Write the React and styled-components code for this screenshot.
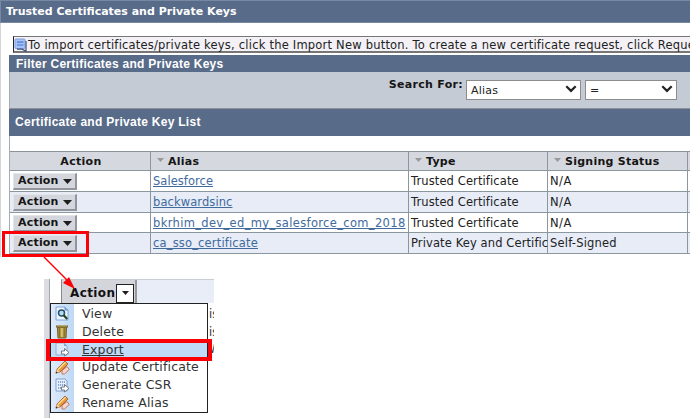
import React from "react";
import styled, { createGlobalStyle } from "styled-components";

const Global = createGlobalStyle`
  * { box-sizing: border-box; }
  body { margin: 0; background: #fff; overflow: hidden; }
`;

const Page = styled.main`
  position: relative;
  width: 690px;
  height: 418px;
  overflow: hidden;
  background: #fff;
  color: #222;
  font: 11.5px/18px "DejaVu Sans", Verdana, sans-serif;
  white-space: nowrap;
`;
const Window = styled.section`
  height: 257px;
  border-left: 1px solid #d3d5d9;
`;
const Label = styled.span`
  letter-spacing: ${(p) => p.$ls || 0}px;
`;
const TitleBar = styled.header`
  height: 23px;
  margin-left: -1px;
  padding: 2px 0 0 5px;
  border: solid #7888a2;
  border-width: 1px 0 1px 1px;
  background: #586b89;
  color: #fff;
  font-size: 11px;
  font-weight: bold;
`;
const Notice = styled.div`
  display: flex;
  align-items: center;
  width: 690px;
  height: 17px;
  margin: 13px 0 2px 12px;
  padding-top: 1px;
  border: 1px solid #777;
  border-bottom: 2px solid #777;
  border-left-color: #222;
  background: #f3f1f5;
  svg { flex: none; margin-right: 1px; }
`;
const Panels = styled.div`
  margin-left: 8px;
  border-left: 1px solid #a5acb7;
`;
const Heading = styled.h2`
  height: ${(p) => p.$h}px;
  margin: 0 0 0 -1px;
  padding-left: ${(p) => p.$pad}px;
  background: #586b89;
  color: #fff;
  font: bold 12px/${(p) => p.$line}px "Liberation Sans", Arial, sans-serif;
`;
const Filter = styled.form`
  display: flex;
  align-items: flex-start;
  height: 37px;
  border-bottom: 1px solid #8d9095;
  background: #c5cbd5;
`;
const SearchLabel = styled.label`
  width: 456px;
  padding: 4px 3px 0 0;
  text-align: right;
  color: #151515;
  font-size: 11px;
  font-weight: bold;
`;
const Select = styled.div`
  display: flex;
  align-items: center;
  justify-content: space-between;
  width: ${(p) => p.$w}px;
  height: 20px;
  margin: 8px 4px 0 0;
  padding: 2px 3px 0 4px;
  border: 1px solid #8c8c8c;
  background: #fff;
  font-size: 11px;
  svg { margin-top: -4px; }
`;
const Table = styled.div`
  margin-top: 15px;
  border-top: 1px solid #8b9299;
`;
const Row = styled.div`
  display: grid;
  grid-template-columns: 141px 258px 139px 140px 20px;
  height: ${(p) => p.$h}px;
  background: ${(p) => p.$bg};
  border-bottom: 1px solid #8b979f;
`;
const Cell = styled.div`
  padding: ${(p) => p.$top || 1}px 0 0 ${(p) => p.$pad || 2}px;
  border-right: 1px solid #8b979f;
`;
const Head = styled(Cell)`
  display: flex;
  align-items: center;
  justify-content: ${(p) => (p.$center ? "center" : "flex-start")};
  gap: 4px;
  font-size: 11px;
  font-weight: bold;
  line-height: 16px;
  color: #151515;
  svg { flex: none; margin-top: -3px; }
`;
const Link = styled.a`
  color: #416a9d;
  text-decoration: underline;
  text-underline-offset: 1px;
  text-decoration-skip-ink: none;
`;
const ActionButton = styled.div`
  display: flex;
  align-items: center;
  gap: 4px;
  width: 64px;
  height: 17px;
  margin-left: 1px;
  padding-left: 4px;
  border: solid #e4e5e8;
  border-width: 1px 2px 2px 1px;
  border-right-color: #92969c;
  border-bottom-color: #92969c;
  background: #d3d6dc;
  color: #151515;
  font-size: 11px;
  font-weight: bold;
`;
const Callout = styled.div`
  position: absolute;
  left: ${(p) => p.$x}px;
  top: ${(p) => p.$y}px;
  width: ${(p) => p.$w}px;
  height: ${(p) => p.$h}px;
  border: ${(p) => p.$b}px solid #fb0007;
`;
const Arrow = styled.svg`
  position: absolute;
  left: 40px;
  top: 256px;
`;
const Inset = styled.section`
  position: absolute;
  left: 44px;
  top: 279px;
  width: 170px;
  height: 139px;
  padding-left: 1px;
  border-left: 5px solid #dcdde2;
  box-shadow: inset 1px 0 #a4a9b1;
`;
const InsetBar = styled.div`
  display: flex;
  height: 24px;
  margin-left: 11px;
  border-top: 1px solid #c9ced6;
  border-left: 1px solid #888;
  background: #e8edf7;
`;
const InsetButton = styled.div`
  display: flex;
  align-items: center;
  justify-content: space-between;
  width: 75px;
  padding: 3px 1px 0 8px;
  border-right: 2px solid #999;
  background: #d3d5db;
  color: #111;
  font-size: 12px;
  font-weight: bold;
`;
const Drop = styled.span`
  display: grid;
  place-items: center;
  width: 18px;
  height: 19px;
  border: 1px solid #222;
  background: #fff;
`;
const Fragments = styled.div`
  position: absolute;
  left: 160px;
  top: 27px;
  width: 5px;
  overflow: hidden;
  line-height: 17.5px;
  color: #333;
`;
const Menu = styled.ul`
  position: relative;
  width: 158px;
  height: 110px;
  margin: 0;
  padding: 1px 0;
  list-style: none;
  border: 1px solid #222;
  background: linear-gradient(90deg, #deebfb 0, #bfd8f5 23px, #fff 23px);
`;
const Item = styled.li`
  display: flex;
  align-items: center;
  height: 17.8px;
  padding-left: 4px;
  font-size: 12.5px;
  letter-spacing: 0.15px;
  color: #333;
  background: ${(p) => (p.$active ? "#bfdbf7" : "transparent")};
  text-decoration: ${(p) => (p.$active ? "underline" : "none")};
  text-underline-offset: 1px;
  text-decoration-skip-ink: none;
  svg { flex: none; margin-right: 12px; }
`;

const Tri = ({ w = 9, h = 5, c = "#1d1d1d" }) => (
  <svg width={w} height={h} viewBox="0 0 9 5" preserveAspectRatio="none"><path d="M0 0H9L4.5 5Z" fill={c} /></svg>
);
const Chevron = () => (
  <svg width="12" height="8" viewBox="0 0 12 8"><path d="M1.3 1.2L6 5.9L10.7 1.2" fill="none" stroke="#222" strokeWidth="2.2" /></svg>
);
const NoteIcon = () => (
  <svg width="13" height="14" viewBox="0 0 13 14">
    <rect x="1" y="1" width="10" height="9.5" rx="1" fill="#a5c3f8" stroke="#809fdb" />
    <path d="M3 4.2H9.5M3 7H9.5" stroke="#4a76d3" strokeWidth="1.2" />
    <path d="M3 11.2H8L12 13.2V3" fill="none" stroke="#40507b" strokeWidth="1.2" />
  </svg>
);

const icons = {
  view: (
    <>
      <path d="M1 1H10L13 4V14H1Z" fill="#edf5ff" stroke="#7fa5d8" />
      <path d="M10 1V4H13" fill="#9ebde5" stroke="#6290ca" />
      <circle cx="6.5" cy="7" r="3" fill="#b5deee" stroke="#294f67" strokeWidth="1.5" />
      <path d="M8.7 9.2L12.2 13" stroke="#2b401f" strokeWidth="2.2" />
    </>
  ),
  remove: (
    <>
      <path d="M2.4 3H11.6L11 14H3Z" fill="#a78f39" stroke="#75612a" />
      <path d="M4.5 4V13M9.7 4V13" stroke="#88722e" /><path d="M6.8 4V13" stroke="#d5c078" strokeWidth="2" />
      <path d="M1 2.5H13" stroke="#75632b" strokeWidth="2" /><path d="M2 2H12" stroke="#c2ac60" />
    </>
  ),
  send: (
    <>
      <path d="M1 1H9L12 4V13H1Z" fill="#dce8f7" stroke="#92add3" />
      <path d="M9 1V4H12" fill="#86a6d2" />
      <path d="M6.5 9H9.5V6.5L14 10.5L9.5 14V12H6.5Z" fill="#fff" stroke="#727a86" />
    </>
  ),
  edit: (
    <>
      <path d="M7 10.5L12 6.5L14.3 9.5L9.5 14H7Z" fill="#f5d7cd" stroke="#c27460" />
      <path d="M1 13L2 9L10 1L13 4L5 12Z" fill="#e69b39" stroke="#a3521e" strokeWidth=".8" />
      <path d="M3 9.5L10.5 2.3" stroke="#ffe09a" strokeWidth="1.3" />
      <path d="M1 13L2 9L5 12Z" fill="#f2d2a5" /><path d="M.6 13.5L1.4 11.5L2.8 12.7Z" fill="#3b2417" />
    </>
  ),
  csr: (
    <>
      <path d="M1 1H10L12 3V13H1Z" fill="#eaf2ff" stroke="#7f9ece" />
      <path d="M3 4H10M3 7H10M3 10H7" stroke="#6b8dc4" strokeWidth="1.7" strokeDasharray="1.2 .8" />
      <path d="M6.5 9H9.5V6.5L14 10.5L9.5 14V12H6.5Z" fill="#fff" stroke="#727a86" />
    </>
  ),
};

const rows = [
  { alias: "Salesforce", type: "Trusted Certificate", status: "N/A", ls: 0.05, h: 21 },
  { alias: "backwardsinc", type: "Trusted Certificate", status: "N/A", ls: 0.09, h: 21 },
  { alias: "bkrhim_dev_ed_my_salesforce_com_2018", type: "Trusted Certificate", status: "N/A", ls: 0.34, h: 20 },
  { alias: "ca_sso_certificate", type: "Private Key and Certific", status: "Self-Signed", ls: 0.17, h: 21 },
];
const menu = [
  ["View", "view"],
  ["Delete", "remove"],
  ["Export", "send"],
  ["Update Certificate", "edit"],
  ["Generate CSR", "csr"],
  ["Rename Alias", "edit"],
];

export default function App() {
  return (
    <Page>
      <Global />
      <Window>
        <TitleBar>Trusted Certificates and Private Keys</TitleBar>
        <Notice>
          <NoteIcon />
          <Label $ls={0.21}>To import certificates/private keys, click the Import New button. To create a new certificate request, click Reque</Label>
        </Notice>
        <Panels>
          <Heading $h={17} $line={19} $pad={7}><Label $ls={0.26}>Filter Certificates and Private Keys</Label></Heading>
          <Filter>
            <SearchLabel><Label $ls={0.3}>Search For:</Label></SearchLabel>
            <Select $w={115}><Label $ls={0.2}>Alias</Label><Chevron /></Select>
            <Select $w={92}><Label>=</Label><Chevron /></Select>
          </Filter>
          <Heading $h={27} $line={27} $pad={6}><Label $ls={0.28}>Certificate and Private Key List</Label></Heading>
          <Table>
            <Row $h={19} $bg="#d5d8df">
              <Head $center><Label $ls={0.3}>Action</Label></Head>
              {["Alias", "Type", "Signing Status"].map((name) => (
                <Head key={name} $pad={6}><Tri w={7} h={4} c="#999" /><Label $ls={0.25}>{name}</Label></Head>
              ))}
            </Row>
            {rows.map(({ alias, type, status, ls, h }, i) => (
              <Row key={alias} $h={h} $bg={i % 2 ? "#e7ecf7" : "#fff"}>
                <Cell $top={2}><ActionButton><Label $ls={0.2}>Action</Label><Tri /></ActionButton></Cell>
                <Cell><Link><Label $ls={ls}>{alias}</Label></Link></Cell>
                <Cell><Label $ls={0.11}>{type}</Label></Cell>
                <Cell><Label $ls={status === "N/A" ? 0.5 : 0.2}>{status}</Label></Cell>
                <Cell />
              </Row>
            ))}
          </Table>
        </Panels>
      </Window>
      <Inset>
        <InsetBar><InsetButton><Label $ls={0.4}>Action</Label><Drop><Tri w={7} h={4} /></Drop></InsetButton></InsetBar>
        <Fragments>is<br />is<br />W</Fragments>
        <Menu>
          {menu.map(([name, icon]) => (
            <Item key={name} $active={name === "Export"}>
              <svg width="15" height="15" viewBox="0 0 15 15">{icons[icon]}</svg>
              {name}
            </Item>
          ))}
        </Menu>
      </Inset>
      <Callout $x={2} $y={231} $w={87} $h={26} $b={3} />
      <Callout $x={46} $y={339} $w={166} $h={22} $b={4} />
      <Arrow width="40" height="36" viewBox="0 0 40 36">
        <path d="M4 1L31 28" stroke="#fb0007" strokeWidth="1.5" />
        <path d="M35 33L23 27L29 21Z" fill="#fb0007" />
      </Arrow>
    </Page>
  );
}
